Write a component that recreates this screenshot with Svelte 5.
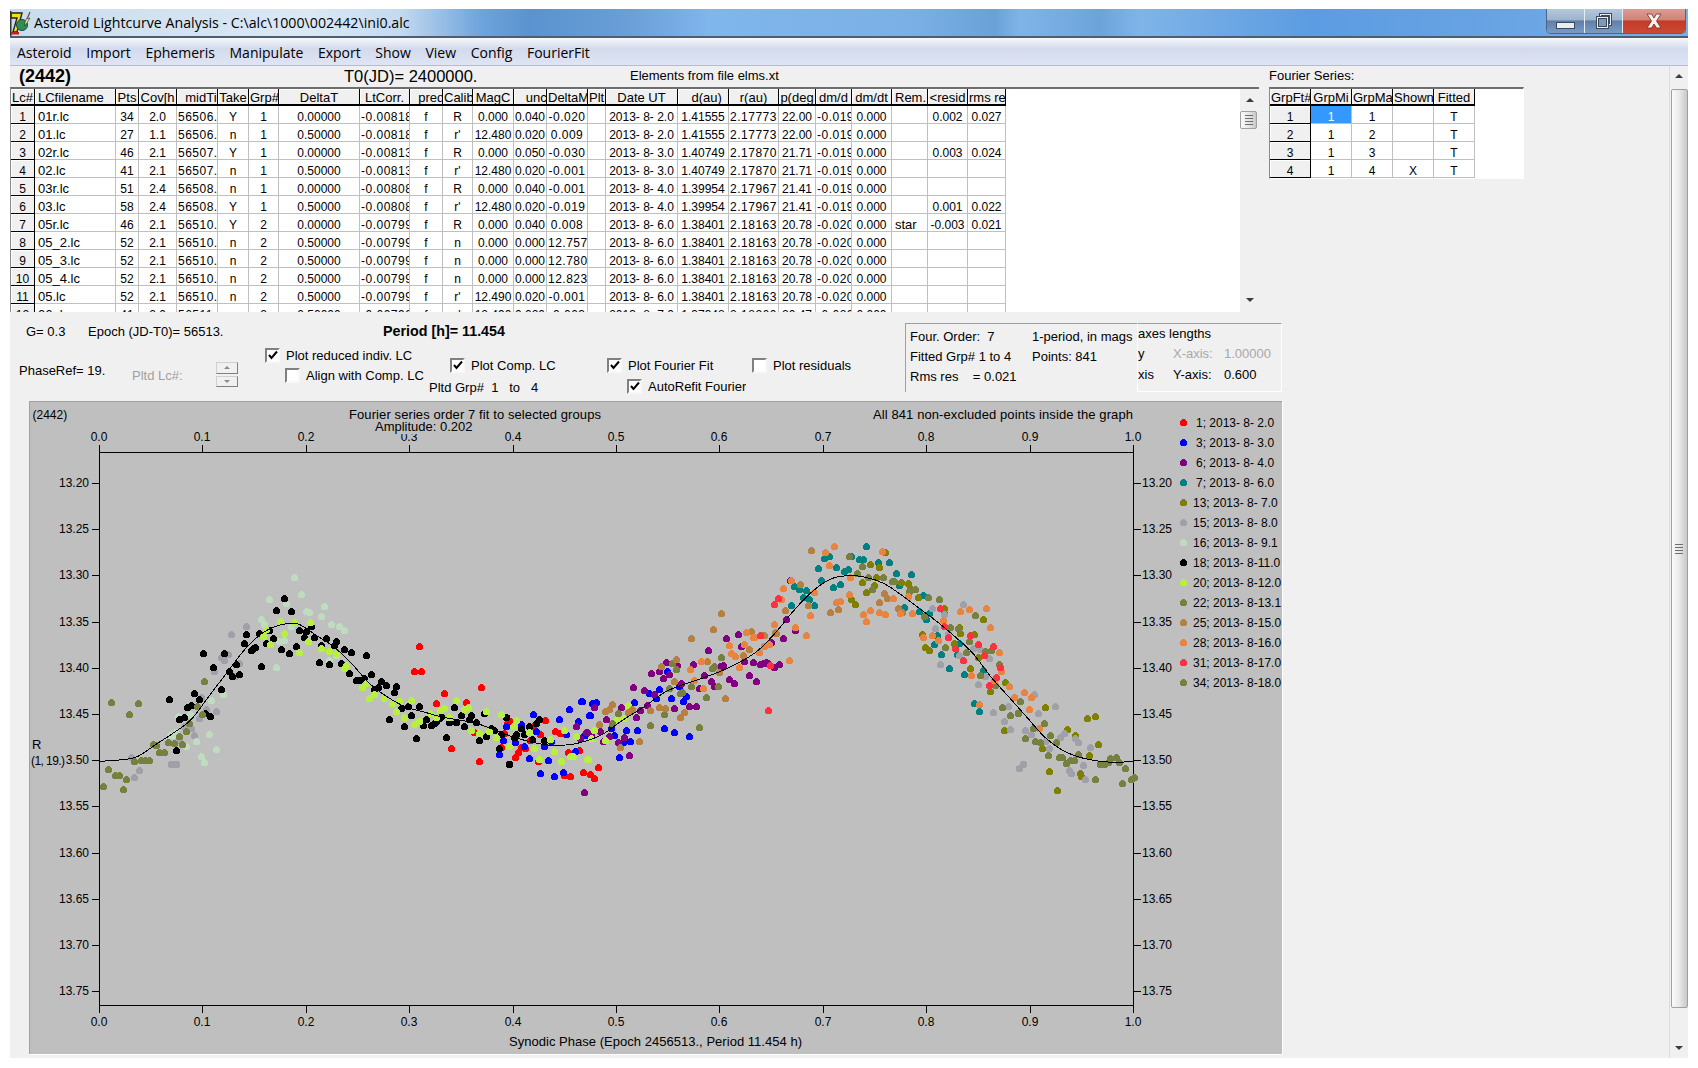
<script lang="ts">
    const menus = ["Asteroid", "Import", "Ephemeris", "Manipulate", "Export", "Show", "View", "Config", "FourierFit"];

    // column edges as measured on the grid
    const edges = [11, 35, 116, 139, 177, 218, 249, 279, 360, 410, 443, 473, 514, 547, 588, 606, 678, 729, 779, 816, 852, 892, 928, 968, 1006];
    const widths = edges.slice(1).map((e, i) => e - edges[i]);

    const headers = ["Lc#", "LCfilename", "Pts", "Cov[h", "\u00a0\u00a0midTi", "Take", "Grp#", "DeltaT", "LtCorr.", "\u00a0\u00a0pred", "Calib", "MagC", "\u00a0\u00a0\u00a0unc", "DeltaM", "Plt", "Date UT", "\u00a0\u00a0d(au)", "r(au)", "p(deg", "dm/d", "dm/dt", "Rem.", "<resid", "rms re"];
    const left = new Set([1, 21]);
    // these columns are too narrow for their numbers in the original, the last digit is cut
    const tight = new Set([4, 8, 13, 17, 19]);

    const rows = [
        ["1", "01r.lc", "34", "2.0", "56506.", "Y", "1", "0.00000", "-0.00818", "f", "R", "0.000", "0.040", "-0.020", "", "2013- 8- 2.0", "1.41555", "2.17773", "22.00", "-0.019", "0.000", "", "0.002", "0.027"],
        ["2", "01.lc", "27", "1.1", "56506.", "n", "1", "0.50000", "-0.00818", "f", "r'", "12.480", "0.020", "0.009", "", "2013- 8- 2.0", "1.41555", "2.17773", "22.00", "-0.019", "0.000", "", "", ""],
        ["3", "02r.lc", "46", "2.1", "56507.", "Y", "1", "0.00000", "-0.00813", "f", "R", "0.000", "0.050", "-0.030", "", "2013- 8- 3.0", "1.40749", "2.17870", "21.71", "-0.019", "0.000", "", "0.003", "0.024"],
        ["4", "02.lc", "41", "2.1", "56507.", "n", "1", "0.50000", "-0.00813", "f", "r'", "12.480", "0.020", "-0.001", "", "2013- 8- 3.0", "1.40749", "2.17870", "21.71", "-0.019", "0.000", "", "", ""],
        ["5", "03r.lc", "51", "2.4", "56508.", "n", "1", "0.00000", "-0.00808", "f", "R", "0.000", "0.040", "-0.001", "", "2013- 8- 4.0", "1.39954", "2.17967", "21.41", "-0.019", "0.000", "", "", ""],
        ["6", "03.lc", "58", "2.4", "56508.", "Y", "1", "0.50000", "-0.00808", "f", "r'", "12.480", "0.020", "-0.019", "", "2013- 8- 4.0", "1.39954", "2.17967", "21.41", "-0.019", "0.000", "", "0.001", "0.022"],
        ["7", "05r.lc", "46", "2.1", "56510.", "Y", "2", "0.00000", "-0.00799", "f", "R", "0.000", "0.040", "0.008", "", "2013- 8- 6.0", "1.38401", "2.18163", "20.78", "-0.020", "0.000", "star", "-0.003", "0.021"],
        ["8", "05_2.lc", "52", "2.1", "56510.", "n", "2", "0.50000", "-0.00799", "f", "n", "0.000", "0.000", "12.757", "", "2013- 8- 6.0", "1.38401", "2.18163", "20.78", "-0.020", "0.000", "", "", ""],
        ["9", "05_3.lc", "52", "2.1", "56510.", "n", "2", "0.50000", "-0.00799", "f", "n", "0.000", "0.000", "12.780", "", "2013- 8- 6.0", "1.38401", "2.18163", "20.78", "-0.020", "0.000", "", "", ""],
        ["10", "05_4.lc", "52", "2.1", "56510.", "n", "2", "0.50000", "-0.00799", "f", "n", "0.000", "0.000", "12.823", "", "2013- 8- 6.0", "1.38401", "2.18163", "20.78", "-0.020", "0.000", "", "", ""],
        ["11", "05.lc", "52", "2.1", "56510.", "n", "2", "0.50000", "-0.00799", "f", "r'", "12.490", "0.020", "-0.001", "", "2013- 8- 6.0", "1.38401", "2.18163", "20.78", "-0.020", "0.000", "", "", ""],
        ["12", "06r.lc", "41", "2.0", "56511.", "n", "2", "0.50000", "-0.00790", "f", "r'", "12.490", "0.020", "-0.003", "", "2013- 8- 7.0", "1.37348", "2.18260", "20.47", "-0.020", "0.000", "", "", ""],
    ];

    const fourier = [["1", "1", "1", "", "T"], ["2", "1", "2", "", "T"], ["3", "1", "3", "", "T"], ["4", "1", "4", "X", "T"]];

    // plot geometry
    const X0 = 99, X1 = 1133, Y0 = 452, Y1 = 1005;
    const xTicks = Array.from({ length: 11 }, (_, i) => ({ x: Math.round(X0 + (i * (X1 - X0)) / 10), label: (i / 10).toFixed(1) }));
    const yTicks = Array.from({ length: 12 }, (_, i) => ({ y: Math.round(483 + i * 46.2), label: (13.2 + i * 0.05).toFixed(2) }));

    // points were read off the picture in two overlapping crops, a = left half, b = right half
    const groups = [
        { label: "1; 2013- 8- 2.0", color: "#ff0000",
          a: [1088,259,1074,334,1096,334,1264,382,1158,400,1137,430,1222,427,1179,565,1256,604,1242,517,1326,520,1335,490,1345,484,1408,499,1443,481,1429,523,1399,541,1387,565,1376,562,1367,577,1359,592,1421,604,1318,560,1470,514,1484,520,1505,577,1537,571,1495,646,1513,649,1547,637,1567,643],
          b: [49,742,7,757,29,763,38,775] },
        { label: "3; 2013- 8- 3.0", color: "#0000ff",
          a: [1312,583,1323,541,1333,499,1357,547,1384,559,1376,493,1407,463,1418,514,1440,559,1460,544,1482,478,1502,523,1510,448,1543,424,1533,484,1553,526,1566,466,1525,574,1398,595,1449,601,1427,640,1468,649,1491,637],
          b: [5,544,33,550,45,547,27,586,152,547,194,520,222,508,213,535,243,454,255,535,287,544,296,529,278,499,160,631,129,631,236,625,264,637,306,649,110,712,139,664,96,646,87,625,120,667,10,645] },
        { label: "6; 2013- 8- 4.0", color: "#800080",
          a: [1530,499,1539,535,1558,517,1552,697],
          b: [147,502,12,817,138,706,124,652,63,664,105,667,82,649,55,634,30,642,20,637,73,598,40,562,115,562,157,592,168,571,188,556,208,523,180,511,199,460,222,454,231,475,250,463,241,427,272,436,315,433,264,565,284,490,306,559,325,559,334,505,348,466,357,391,368,484,376,499,409,355,441,343,452,379,391,439,400,436,418,478,432,490,460,424,474,466,483,427,494,484,503,433,512,430,521,427,527,430,544,442,558,433,536,367,567,355,577,298,587,181,601,331] },
        { label: "7; 2013- 8- 6.0", color: "#008080",
          a: [],
          b: [802,79,698,109,684,115,665,145,718,142,759,109,782,118,792,118,833,127,866,127,885,160,928,163,740,154,750,148,676,181,707,202,727,193,600,199,614,208,634,211,624,232,642,238,656,256,592,256,893,196,908,262,960,226,950,274,970,298,978,280,1020,280,1000,346,992,373,1012,403,1034,445,1055,403,1076,463,1127,451,1104,550,1118,574,1060,370] },
        { label: "13; 2013- 8- 7.0", color: "#808000",
          a: [],
          b: [855,97,837,142,758,238,771,253,813,133,800,217,790,187,830,170,823,196,900,187,918,190,925,205,945,230,1018,265,958,343,965,382,978,391,1060,322,1065,340,1047,370,1104,343,1127,298,1093,445,1114,412,1147,514,1191,487,1303,562,1420,595,1441,589,1187,631,1314,754,1336,811,1399,760,1449,673,1364,628,1294,685,1386,646,1426,706,1402,767] },
        { label: "15; 2013- 8- 8.0", color: "#a0a0a8",
          a: [283,592,292,652,304,631,395,612,408,613,418,541,460,526,430,497,452,503,473,475,492,448,521,454,605,199,563,223,535,290,543,301,555,283,586,310,575,347,480,412,514,332],
          b: [1071,253,986,265,1018,283,995,325,1030,340,1060,405,1009,433,1100,385,1120,388,1145,415,1113,493,1135,469,1155,577,1197,559,1186,604,1205,628,1247,631,1281,580,1270,523,1331,559,1262,643,1303,664,1314,685,1345,652,1355,640,1395,667,1385,655,1429,682,1408,736,1230,745,1240,733,1369,751,1375,760,1415,778] },
        { label: "16; 2013- 8- 9.1", color: "#c0dcc0",
          a: [668,118,717,130,759,103,740,52,774,152,782,155,824,139,815,169,843,193,866,199,878,211,648,176,655,191,730,198,710,240,698,244,690,322,857,285,836,300,540,401,508,419,415,468,447,462,405,516,392,526,398,524,500,523,465,544,437,559,521,568,480,589,488,607],
          b: [] },
        { label: "18; 2013- 8-11.0", color: "#000000",
          a: [390,418,483,280,513,322,544,280,460,400,474,418,440,442,452,436,418,478,432,472,490,458,503,469,409,571,535,388,556,334,565,347,578,311,586,341,598,250,605,223,618,271,625,265,629,260,640,220,647,319,662,250,670,211,681,235,689,151,703,268,712,115,724,280,731,154,745,259,754,211,766,232,773,214,787,199,796,232,808,307,815,256,829,235,838,313,851,256,858,244,872,310,880,268,892,340,900,277,914,361,922,361,934,355,941,286,956,343,964,388,973,382,983,364,997,376,1006,478,1018,397,1025,379,1039,445,1048,499,1059,439,1067,466,1081,535,1090,439,1101,496,1109,478,1123,496,1130,490,1137,484,1144,475,1151,469,1165,532,1174,487,1186,442,1193,487,1207,466,1216,499,1228,478,1235,466,1249,487,1258,541,1270,460,1277,529,1291,505,1299,511,1312,565,1320,523,1333,472,1342,613,1354,532,1362,523,1376,505,1384,523,1396,499,1406,538,1417,490,1426,478,1438,541],
          b: [] },
        { label: "20; 2013- 8-12.0", color: "#b8f040",
          a: [701,184,712,220,740,187,785,187,660,208,652,229,671,253,778,244,754,277,815,265,838,272,857,280,880,325,886,316,929,382,940,370,950,415,964,403,992,415,1014,430,1034,424,1025,454,1047,472,1067,421,1075,493,1088,484,1120,460,1137,472,1148,450,1160,444,1193,421,1172,470,1215,448,1225,442,1235,511,1258,520,1278,454,1284,514,1305,532,1320,463,1342,559,1351,499,1361,481,1396,517,1412,565,1426,598,1455,538,1468,574,1487,604,1496,511,1511,589,1520,589,1530,529,1560,598],
          b: [21,718,40,630,70,660,135,555,120,595,100,600,30,655] },
        { label: "22; 2013- 8-13.1", color: "#788040",
          a: [],
          b: [752,109,790,139,873,184,880,184,847,172,775,160,805,172,818,208,920,214,938,208,973,232,1004,238,930,280,962,289,1037,322,1057,325,1088,364,1107,286,1022,382,1080,397,1135,394,1150,391,1172,433,1120,466,1162,496,1232,544,1182,562,1205,586,1225,580,396,412,376,439,268,448,258,430,250,505,312,499,286,516,354,532,385,499,195,616,236,583,334,622,105,580,90,610,280,520,370,445] },
        { label: "25; 2013- 8-15.0", color: "#b88040",
          a: [],
          b: [648,91,395,280,373,328,311,355,269,418,228,439,262,484,238,565,220,562,196,571,290,575,281,592,407,535,164,664,113,682,52,613,70,574,80,568,90,553,145,568,135,577,575,271,617,193,638,256,700,277,723,268,836,247,850,220,860,235,890,265,902,277,480,334,515,346,550,340,472,388,457,406,388,457,355,424,545,337] },
        { label: "28; 2013- 8-16.0", color: "#e88440",
          a: [],
          b: [710,79,687,97,696,136,592,181,569,205,654,217,562,238,645,286,633,346,603,322,584,421,542,313,466,337,485,352,416,376,423,400,435,409,446,442,500,397,515,379,528,373,339,424,345,505,320,481,309,448,488,352,458,373,757,172,752,223,717,247,729,244,793,283,813,271,801,304,836,277,855,283,877,235,896,280,918,229,930,280,986,346,1003,361,961,352,1015,301,1065,274,1088,268,1137,265,1149,322,1172,397,1180,454,1200,499,1160,481,1095,466,1215,532,1242,517,1262,532,1256,568,1284,625,1117,553,845,94] },
        { label: "31; 2013- 8-17.0", color: "#ff3040",
          a: [],
          b: [553,235,544,253,505,346,525,571,532,436,1007,265,1018,319,1031,352,1051,385,1073,421,1091,346,1115,373,1157,379,1130,406,1177,442,1165,470,1144,496] },
        { label: "34; 2013- 8-18.0", color: "#788040",
          a: [227,427,301,430,278,463,205,679,217,628,237,644,248,646,269,658,259,688,290,604,310,601,322,600,332,601,344,553,352,556,362,577,376,577,385,547,403,550,425,552,418,527,438,512,445,488,467,437,488,364,481,462],
          b: [1298,610,1267,625,1247,655,1275,664,1288,667,1317,646,1332,667,1340,712,1350,712,1360,730,1373,721,1383,721,1393,703,1310,706,1455,733,1467,733,1478,727,1485,715,1500,712,1510,727,1527,745,1518,790,1542,778,1550,772,1443,778] },
    ];

    function toPoints(group: { a: number[]; b: number[] }) {
        const out: { x: number; y: number }[] = [];
        for (let i = 0; i < group.a.length; i += 2) out.push({ x: Math.round(30 + group.a[i] / 2.8) + 0.5, y: Math.round(560 + group.a[i + 1] / 3) + 0.5 });
        for (let i = 0; i < group.b.length; i += 2) out.push({ x: Math.round(580 + group.b[i] / 2.8) + 0.5, y: Math.round(520 + group.b[i + 1] / 3) + 0.5 });
        return out;
    }

    const curveA = [195,604,250,600,300,590,350,555,400,520,450,480,500,410,550,340,600,270,650,220,700,195,750,192,800,225,850,260,900,310,950,370,1000,410,1050,440,1100,455,1150,470,1200,480,1250,490,1300,510,1350,530,1400,545,1450,555,1500,555];
    const curveB = [0,668,60,645,120,600,180,560,240,515,300,490,380,460,450,425,500,390,550,335,600,270,650,215,700,178,750,167,800,172,850,190,900,225,950,265,1000,305,1050,350,1100,400,1150,470,1200,530,1250,590,1300,650,1350,690,1400,712,1450,723,1500,727,1552,724];

    function curvePath() {
        const p: [number, number][] = [];
        for (let i = 0; i < curveA.length; i += 2) p.push([30 + curveA[i] / 2.8, 560 + curveA[i + 1] / 3]);
        for (let i = 0; i < curveB.length; i += 2) p.push([580 + curveB[i] / 2.8, 520 + curveB[i + 1] / 3]);
        let d = `M${p[0][0].toFixed(1)} ${p[0][1].toFixed(1)}`;
        for (let i = 0; i < p.length - 1; i++) {
            const a = p[Math.max(i - 1, 0)], b = p[i], c = p[i + 1], e = p[Math.min(i + 2, p.length - 1)];
            const c1x = b[0] + (c[0] - a[0]) / 6, c1y = b[1] + (c[1] - a[1]) / 6;
            const c2x = c[0] - (e[0] - b[0]) / 6, c2y = c[1] - (e[1] - b[1]) / 6;
            d += `C${c1x.toFixed(1)} ${c1y.toFixed(1)} ${c2x.toFixed(1)} ${c2y.toFixed(1)} ${c[0].toFixed(1)} ${c[1].toFixed(1)}`;
        }
        return d;
    }
    const curve = curvePath();
</script>

{#snippet check(label, on)}
    <label class="check">
        <span class="box">
            {#if on}
                <svg width="10" height="10" viewBox="0 0 10 10"><path d="M1 5 L3.5 8 L9 1.5" fill="none" stroke="#000" stroke-width="2" /></svg>
            {/if}
        </span>
        <span class="cap">{label}</span>
    </label>
{/snippet}

<div class="window">
    <header class="titlebar">
        <svg class="appicon" width="21" height="25" viewBox="0 0 21 25">
            <path d="M1 2 H12 L7 21 H3 L7 7 H1Z" fill="#f2e21c" stroke="#222" stroke-width="1.4" />
            <rect x="0" y="0" width="1.5" height="25" fill="#333" />
            <rect x="1" y="21" width="8" height="2.5" fill="#c8201c" />
            <circle cx="12" cy="14" r="5.5" fill="#2f8f52" stroke="#23425c" />
            <path d="M15 11 L20 1 L17.5 8 L20 7 L15 15Z" fill="#f6ef8a" stroke="#222" stroke-width=".6" />
        </svg>
        <span class="wintitle">Asteroid Lightcurve Analysis - C:\alc\1000\002442\ini0.alc</span>
        <div class="winbtns">
            <div class="wb wb-min"><span class="min-bar"></span></div>
            <div class="wb wb-max">
                <svg width="20" height="18" viewBox="0 0 20 18"><rect x="6.5" y="2.5" width="10" height="10" fill="none" stroke="#3c4a5c" stroke-width="3" /><rect x="6.5" y="2.5" width="10" height="10" fill="none" stroke="#e8eef4" /><rect x="3.5" y="5.5" width="10" height="10" fill="#7e9ab8" stroke="#3c4a5c" stroke-width="3" /><rect x="3.5" y="5.5" width="10" height="10" fill="none" stroke="#e8eef4" /></svg>
            </div>
            <div class="wb wb-close">
                <svg width="22" height="18" viewBox="0 0 22 18"><path d="M4 2 H8.5 L11 6 L13.5 2 H18 L13.5 9 L18 16 H13.5 L11 12 L8.5 16 H4 L8.5 9Z" fill="#f4f0ee" stroke="#7a2a20" stroke-width=".8" /></svg>
            </div>
        </div>
    </header>

    <nav class="menubar">
        {#each menus as m}<span>{m}</span>{/each}
    </nav>

    <div class="client">
        <div class="main">
            <div class="upper">
                <section class="lc-side">
                    <div class="headline">
                        <b class="astnum">(2442)</b>
                        <span class="t0">T0(JD)= 2400000.</span>
                        <span class="elems">Elements from file elms.xt</span>
                    </div>
                    <div class="gridbox lcgrid">
                        <table>
                            <colgroup>
                                {#each widths as w}<col style="width:{w}px" />{/each}
                            </colgroup>
                            <thead>
                                <tr>{#each headers as h, i}<th class:l={left.has(i)}>{h}</th>{/each}</tr>
                            </thead>
                            <tbody>
                                {#each rows as row}
                                    <tr>
                                        {#each row as v, i}
                                            {#if i === 0}<th>{v}</th>{:else}<td class:l={left.has(i)} class:tight={tight.has(i)}>{v}</td>{/if}
                                        {/each}
                                    </tr>
                                {/each}
                            </tbody>
                        </table>
                        <div class="vscroll small">
                            <span class="arrow up"></span>
                            <div class="thumb"><i></i><i></i><i></i><i></i></div>
                            <span class="spacer"></span>
                            <span class="arrow down"></span>
                        </div>
                    </div>
                </section>

                <section class="fourier-side">
                    <div class="fs-label">Fourier Series:</div>
                    <div class="gridbox fsgrid">
                        <table>
                            <colgroup>
                                {#each { length: 5 } as _}<col style="width:41px" />{/each}
                            </colgroup>
                            <thead>
                                <tr><th>GrpFt#</th><th>GrpMi</th><th>GrpMa</th><th>Shown</th><th>Fitted</th></tr>
                            </thead>
                            <tbody>
                                {#each fourier as row, r}
                                    <tr>
                                        {#each row as v, i}
                                            {#if i === 0}<th>{v}</th>{:else}<td class:sel={r === 0 && i === 1}>{v}</td>{/if}
                                        {/each}
                                    </tr>
                                {/each}
                            </tbody>
                        </table>
                    </div>
                </section>
            </div>

            <section class="options">
                <div class="opts-left">
                    <div class="opts-head">
                        <span class="g">G= 0.3</span>
                        <span class="epoch">Epoch (JD-T0)= 56513.</span>
                        <b class="period">Period [h]= 11.454</b>
                    </div>
                    <div class="opts-ctl">
                        <span class="phaseref">PhaseRef= 19.</span>
                        <span class="pltdlc">Pltd Lc#:</span>
                        <div class="updown">
                            <span class="ud"><span class="arrow up tiny"></span></span>
                            <span class="ud"><span class="arrow down tiny"></span></span>
                        </div>
                        <div class="cg cg-reduced">
                            {@render check("Plot reduced indiv. LC", true)}
                            <div class="indent">{@render check("Align with Comp. LC", false)}</div>
                        </div>
                        <div class="cg cg-comp">
                            {@render check("Plot Comp. LC", true)}
                            <span class="pltdgrp">Pltd Grp#&nbsp; 1 &nbsp; to &nbsp; 4</span>
                        </div>
                        <div class="cg cg-fit">
                            {@render check("Plot Fourier Fit", true)}
                            <div class="indent second">{@render check("AutoRefit Fourier", true)}</div>
                        </div>
                        <div class="cg cg-res">
                            {@render check("Plot residuals", false)}
                        </div>
                    </div>
                </div>
                <div class="infobox">
                    <div class="inforow"><span>Four. Order:&nbsp; 7</span><span>1-period, in mags</span></div>
                    <div class="inforow"><span>Fitted Grp# 1 to 4</span><span>Points: 841</span></div>
                    <div class="inforow"><span>Rms res &nbsp; &nbsp;= 0.021</span></div>
                </div>
                <div class="axesbox">
                    <div class="ax-title">axes lengths</div>
                    <div class="ax-row first"><span class="cut">y</span><span class="off ax-name">X-axis:</span><span class="off">1.00000</span></div>
                    <div class="ax-row"><span class="cut">xis</span><span class="ax-name">Y-axis:</span><span>0.600</span></div>
                </div>
            </section>

            <div class="plotwrap">
                <svg class="plot" width="1254" height="654" viewBox="29 401 1254 654">
                    <rect x="29" y="401" width="1254" height="654" fill="#bfbfbf" />
                    <path d="M29.5 1055 V401.5 H1283" fill="none" stroke="#a0a0a0" />
                    <path d="M1282.5 401 V1054.5 H29" fill="none" stroke="#fff" />

                    <g shape-rendering="crispEdges" stroke="#000" fill="none">
                        <path d="M{X0} {Y0 + 0.5} H{X1}" stroke-width="1" />
                        <path d="M{X0} {Y1 + 0.5} H{X1}" stroke-width="1" />
                        <path d="M{X0 + 0.5} {Y0 - 7} V{Y1 + 8}" />
                        <path d="M{X1 + 0.5} {Y0 - 7} V{Y1 + 8}" />
                        {#each xTicks as t}
                            <path d="M{t.x + 0.5} {Y0 - 7} V{Y0}" />
                            <path d="M{t.x + 0.5} {Y1} V{Y1 + 8}" />
                        {/each}
                        {#each yTicks as t}
                            <path d="M{X0 - 7} {t.y + 0.5} H{X0}" />
                            <path d="M{X1} {t.y + 0.5} H{X1 + 8}" />
                        {/each}
                    </g>

                    {#each xTicks as t}
                        <text x={t.x} y="441" text-anchor="middle">{t.label}</text>
                        <text x={t.x} y="1026" text-anchor="middle">{t.label}</text>
                    {/each}
                    {#each yTicks as t}
                        <text x="89" y={t.y + 4} text-anchor="end">{t.label}</text>
                        <text x="1142" y={t.y + 4}>{t.label}</text>
                    {/each}

                    <text x="32.5" y="419">(2442)</text>
                    <text class="big" x="349" y="419" textLength="252">Fourier series order 7 fit to selected groups</text>
                    <rect x="372" y="421" width="105" height="13" fill="#bfbfbf" />
                    <text class="big" x="375" y="431">Amplitude: 0.202</text>
                    <text class="big" x="873" y="419" textLength="260">All 841 non-excluded points inside the graph</text>
                    <text class="big" x="509" y="1046" textLength="293">Synodic Phase (Epoch 2456513., Period 11.454 h)</text>

                    <g shape-rendering="crispEdges">
                        {#each groups as g}
                            {#each toPoints(g) as p}
                                <circle cx={p.x} cy={p.y} r="3.5" fill={g.color} />
                            {/each}
                        {/each}
                    </g>
                    <path d={curve} fill="none" stroke="#000" stroke-width="1" shape-rendering="crispEdges" />

                    <text class="big" x="32" y="749">R</text>
                    <rect x="30" y="754" width="35.5" height="13" fill="#bfbfbf" />
                    <text x="31" y="765" textLength="34">(1, 19.)</text>

                    {#each groups as g, i}
                        <circle cx="1183.5" cy={422.5 + i * 20} r="3.5" fill={g.color} shape-rendering="crispEdges" />
                        <text x={g.label.length === 15 ? 1196 : 1193} y={427 + i * 20}>{g.label}</text>
                    {/each}
                </svg>
            </div>
        </div>

        <div class="vscroll outer">
            <span class="arrow up"></span>
            <div class="thumb"><i></i><i></i><i></i><i></i></div>
            <span class="spacer"></span>
            <span class="arrow down"></span>
        </div>
    </div>
</div>

<style>
    :global(body) {
        background: #fff;
        font-family: "Liberation Sans", Arial, sans-serif;
        font-size: 12px;
        color: #000;
    }

    .window {
        box-sizing: border-box;
        width: 1678px;
        height: 1049px;
        margin: 9px 0 0 10px;
        display: flex;
        flex-direction: column;
        overflow: hidden;
    }

    .titlebar {
        position: relative;
        box-sizing: border-box;
        height: 29px;
        flex: none;
        display: flex;
        align-items: center;
        border-bottom: 2px solid #4b5e72;
        background: linear-gradient(90deg, #c9dced 0, #dbe8f4 300px, #c4daf0 390px, #6fa4dc 470px, #5a93cf 520px, #6a9fd8 620px, #7fb6ec 700px, #7ab0e6 900px, #6aa2d8 985px, #7fb4e8 1010px, #6ca4da 1090px, #7fb4e8 1130px, #5c9ce2 1300px, #69a4e4 1500px, #7ab0e6 1678px);
    }

    .appicon {
        flex: none;
        margin-top: 1px;
    }

    .wintitle {
        margin-left: 3px;
        font-family: "Open Sans", sans-serif;
        font-size: 14.2px;
        color: #000;
    }

    .winbtns {
        position: absolute;
        top: 0;
        right: 2px;
        height: 24px;
        display: flex;
        border: 1px solid #4a6484;
        border-top: 0;
        border-radius: 0 0 5px 5px;
        overflow: hidden;
    }

    .wb {
        display: flex;
        align-items: center;
        justify-content: center;
    }

    .wb-min, .wb-max {
        width: 37px;
        border-right: 1px solid #e4ecf4;
        background: linear-gradient(#b4c8dc 0, #9db4cc 45%, #5e7fa8 50%, #7a9cc4 100%);
    }

    .wb-close {
        width: 62px;
        background: linear-gradient(#dc9c94 0, #d08478 45%, #c43a26 50%, #cc4a34 100%);
    }

    .min-bar {
        width: 17px;
        height: 5px;
        margin-top: 8px;
        background: #e8eef4;
        border: 1px solid #3c4a5c;
    }

    .menubar {
        box-sizing: border-box;
        height: 28px;
        flex: none;
        display: flex;
        align-items: center;
        gap: 14.6px;
        padding: 2px 0 0 7px;
        border-bottom: 1px solid #b6bccc;
        background: linear-gradient(#f6f8fb 0, #d3daed 40%, #dfe5f3 100%);
        font-family: "Open Sans", sans-serif;
        font-size: 14px;
    }

    .client {
        flex: 1;
        min-height: 0;
        display: flex;
        background: #f0f0f0;
    }

    .main {
        flex: 1;
        min-width: 0;
    }

    .upper {
        display: flex;
        height: 246px;
    }

    .lc-side {
        width: 1249px;
        flex: none;
    }

    .headline {
        height: 21px;
        display: flex;
        align-items: center;
    }

    .astnum {
        margin-left: 9px;
        width: 325px;
        font-size: 18px;
    }

    .t0 {
        width: 286px;
        font-size: 16.5px;
    }

    .elems {
        margin-top: -2px;
        font-size: 13px;
    }

    .gridbox {
        display: flex;
        box-sizing: border-box;
        background: #fff;
        overflow: hidden;
        border-top: 2px solid #6e6e6e;
        border-left: 1px solid #8a8a8a;
    }

    .lcgrid {
        height: 225px;
    }

    table {
        border-collapse: separate;
        border-spacing: 0;
        table-layout: fixed;
        flex: none;
        height: fit-content;
    }

    .lcgrid table {
        width: 995px;
    }

    th, td {
        box-sizing: border-box;
        height: 18px;
        padding: 5px 1px 0;
        line-height: 12px;
        font-weight: normal;
        font-size: 12px;
        text-align: center;
        white-space: nowrap;
        overflow: hidden;
    }

    td {
        border-right: 1px solid #c0c0c0;
        border-bottom: 1px solid #c0c0c0;
        background: #fff;
    }

    th {
        background: #f0f0f0;
        border-right: 1px solid #000;
        border-bottom: 1px solid #000;
        box-shadow: inset 1px 1px 0 #fff;
    }

    thead th {
        height: 17px;
        padding-top: 3px;
        border-bottom-width: 2px;
        font-size: 13px;
    }

    .l {
        padding-left: 3px;
        text-align: left;
        font-size: 13px;
    }

    td.l {
        overflow: visible;
    }

    .tight {
        letter-spacing: 0.5px;
    }

    td.sel {
        background: #3399ff;
        color: #fff;
    }

    .vscroll {
        flex: none;
        display: flex;
        flex-direction: column;
        align-items: center;
        box-sizing: border-box;
        background: #f0f0f0;
    }

    .vscroll.small {
        width: 19px;
        margin-left: auto;
    }

    .vscroll.outer {
        width: 19px;
        border-left: 1px solid #dcdcdc;
    }

    .arrow {
        flex: none;
        display: block;
        width: 0;
        height: 0;
        border-left: 4px solid transparent;
        border-right: 4px solid transparent;
    }

    .arrow.up {
        margin: 8px 0 7px;
        border-bottom: 4px solid #3c3c3c;
    }

    .arrow.down {
        margin: 7px 0 8px;
        border-top: 4px solid #3c3c3c;
    }

    .small .arrow.up {
        margin-top: 9px;
    }

    .small .arrow.down {
        margin-bottom: 10px;
    }

    .outer .arrow.up {
        margin-bottom: 11px;
    }

    .arrow.tiny {
        margin: 0;
        border-left-width: 3px;
        border-right-width: 3px;
        border-top-width: 3px;
        border-bottom-width: 3px;
        border-top-color: transparent;
        border-bottom-color: #8a8a8a;
    }

    .arrow.down.tiny {
        border-bottom-color: transparent;
        border-top-color: #8a8a8a;
    }

    .spacer {
        flex: 1;
    }

    .thumb {
        box-sizing: border-box;
        width: 17px;
        display: flex;
        flex-direction: column;
        align-items: center;
        justify-content: center;
        gap: 2px;
        border: 1px solid #a0a0a0;
        border-radius: 2px;
        background: linear-gradient(90deg, #fafafa, #e8e8e8 50%, #c8c8c8);
    }

    .thumb i {
        display: block;
        width: 8px;
        height: 1px;
        background: #6e6e6e;
    }

    .small .thumb {
        height: 18px;
        margin: 2px 2px 0 0;
    }

    .outer .thumb {
        height: 919px;
    }

    .fourier-side {
        margin-left: 10px;
        width: 255px;
    }

    .fs-label {
        height: 20px;
        margin-top: 1px;
        line-height: 17px;
        font-size: 13px;
    }

    .fsgrid {
        height: 92px;
        border-right: 1px solid #fff;
        border-bottom: 1px solid #fff;
    }

    .fsgrid table {
        width: 205px;
    }

    .options {
        display: flex;
        height: 89px;
        font-size: 13px;
    }

    .opts-left {
        width: 895px;
        flex: none;
    }

    .opts-head {
        height: 33px;
        display: flex;
        align-items: flex-end;
        padding-left: 16px;
        box-sizing: border-box;
        padding-bottom: 6px;
    }

    .g {
        width: 62px;
    }

    .epoch {
        width: 295px;
    }

    .period {
        font-size: 14.3px;
    }

    .opts-ctl {
        display: flex;
        padding-left: 9px;
    }

    .phaseref {
        width: 113px;
        margin-top: 18px;
    }

    .pltdlc {
        width: 84px;
        margin-top: 23px;
        color: #a0a0a0;
    }

    .updown {
        width: 22px;
        height: 25px;
        margin: 17px 27px 0 0;
        flex: none;
        display: flex;
        flex-direction: column;
        gap: 2px;
    }

    .ud {
        flex: 1;
        display: flex;
        align-items: center;
        justify-content: center;
        box-sizing: border-box;
        background: #f0f0f0;
        border: 1px solid #d0d0d0;
        border-right-color: #808080;
        border-bottom-color: #808080;
    }

    .cg {
        flex: none;
    }

    .cg-reduced {
        width: 185px;
        padding-top: 2px;
    }

    .cg-reduced .indent {
        margin: 4px 0 0 20px;
    }

    .cg-comp {
        width: 157px;
        padding-top: 12px;
    }

    .pltdgrp {
        display: block;
        margin: 7px 0 0 -21px;
    }

    .cg-fit {
        width: 145px;
        padding-top: 12px;
    }

    .cg-fit .indent {
        margin: 5px 0 0 20px;
    }

    .cg-fit .indent .cap {
        width: 98px;
        overflow: hidden;
    }

    .cg-res {
        padding-top: 12px;
    }

    .check {
        display: flex;
        align-items: center;
        gap: 6px;
        height: 16px;
        white-space: nowrap;
    }

    .box {
        box-sizing: border-box;
        width: 15px;
        height: 15px;
        flex: none;
        display: flex;
        align-items: center;
        justify-content: center;
        background: #fff;
        border: 2px solid;
        border-color: #808080 #f8f8f8 #f8f8f8 #808080;
    }

    .infobox {
        box-sizing: border-box;
        width: 232px;
        height: 69px;
        margin-top: 11px;
        padding: 2px 0 0 4px;
        border-top: 1px solid #a0a0a0;
        border-left: 1px solid #a0a0a0;
        overflow: hidden;
    }

    .inforow {
        display: flex;
        height: 20px;
        align-items: center;
    }

    .inforow span:first-child {
        width: 122px;
        flex: none;
    }

    .axesbox {
        box-sizing: border-box;
        width: 145px;
        height: 69px;
        margin-top: 11px;
        border: 1px solid;
        border-color: #a0a0a0 #fff #fff #fff;
        overflow: hidden;
    }

    .ax-title {
        margin-top: 2px;
        height: 15px;
    }

    .ax-row {
        display: flex;
        align-items: center;
        height: 21px;
    }

    .ax-row.first {
        margin-top: 2px;
    }

    .cut {
        width: 35px;
        flex: none;
    }

    .ax-name {
        width: 51px;
        flex: none;
    }

    .off {
        color: #a8a8a8;
    }

    .plotwrap {
        margin-left: 19px;
        height: 654px;
    }

    .plot {
        display: block;
    }

    .plot text {
        font-family: "Liberation Sans", Arial, sans-serif;
        font-size: 12px;
        fill: #000;
    }

    .plot text.big {
        font-size: 13px;
    }
</style>
